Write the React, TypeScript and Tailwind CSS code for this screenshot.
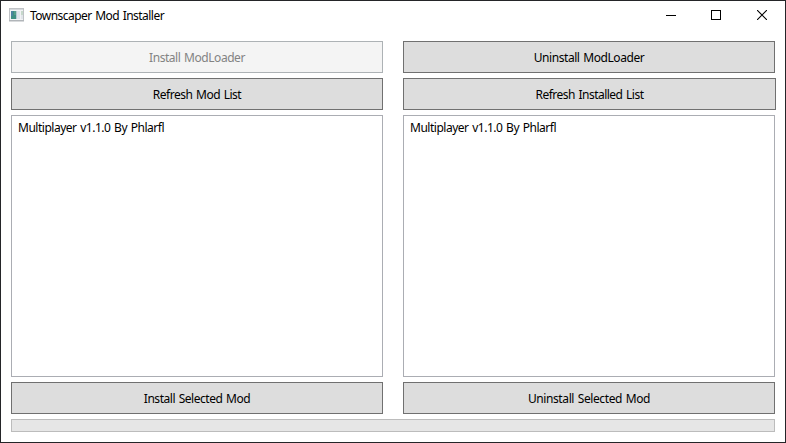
import type { ReactNode } from "react";

function AppIcon() {
  return (
    <svg width="15" height="14" viewBox="0 0 15 14" className="mt-[7px] self-start" shapeRendering="crispEdges" aria-hidden="true">
      <rect x="0.5" y="0.5" width="14" height="12" fill="#f2f3f5" stroke="#bfc2c6" />
      <rect x="1" y="1" width="13" height="1" fill="#d5d8dc" />
      <rect x="2" y="3" width="5" height="8" fill="#3f8f83" />
      <rect x="2" y="3" width="2" height="5" fill="#4b83a0" />
      <rect x="5" y="3" width="2" height="4" fill="#569d8c" />
      <rect x="7" y="3" width="1" height="8" fill="#b5cbd2" />
      <rect x="8" y="3" width="3" height="8" fill="#dfe3ea" />
      <rect x="12" y="3" width="2" height="4" fill="#c6d8cb" />
      <rect x="12" y="7" width="2" height="4" fill="#e1e5ea" />
      <rect x="0" y="12" width="15" height="1" fill="#b1b5b9" />
      <rect x="0" y="13" width="15" height="1" fill="#d8dadc" />
    </svg>
  );
}

function TitleBar() {
  return (
    <header className="flex h-[29px] shrink-0 items-center pl-2">
      <AppIcon />
      <h1 className="ml-[6px] whitespace-nowrap pt-px text-[12px] leading-4 tracking-[-0.54px] text-black">
        Townscaper Mod Installer
      </h1>
      <div className="ml-auto flex h-full">
        <button aria-label="Minimize" className="flex w-[44px] items-start justify-center pt-[9px]">
          <svg width="10" height="10" shapeRendering="crispEdges"><path d="M0 5.5H10" stroke="#000" /></svg>
        </button>
        <button aria-label="Maximize" className="flex w-[46px] items-start justify-center pt-[9px]">
          <svg width="10" height="10" shapeRendering="crispEdges"><rect x="0.5" y="0.5" width="9" height="9" fill="none" stroke="#000" /></svg>
        </button>
        <button aria-label="Close" className="flex w-[46px] items-start justify-center pt-[9px]">
          <svg width="10" height="10"><path d="M0 0L10 10M10 0L0 10" stroke="#000" strokeWidth="1.1" /></svg>
        </button>
      </div>
    </header>
  );
}

function ActionButton({ children, disabled = false, className = "w-full" }: { children: ReactNode; disabled?: boolean; className?: string }) {
  const tone = disabled ? "border-[#adb2b5] bg-[#f4f4f4] text-[#838383]" : "border-[#707070] bg-[#dddddd] text-black";
  return (
    <button disabled={disabled} className={`flex h-8 shrink-0 items-center justify-center whitespace-nowrap border pt-px text-[12px] leading-4 [word-spacing:1px] ${tone} ${className}`}>
      {children}
    </button>
  );
}

function ModList({ items }: { items: string[] }) {
  return (
    <ul className="h-[262px] w-full shrink-0 border border-[#abadb3] bg-white px-1.5 py-1 text-[12px] leading-4 tracking-[-0.48px]">
      {items.map((item) => <li key={item}>{item}</li>)}
    </ul>
  );
}

export default function App() {
  const mods = ["Multiplayer v1.1.0 By Phlarfl"];
  return (
    <div className="flex h-[443px] w-[786px] flex-col overflow-hidden border border-[#242528] bg-white font-['Noto_Sans','Open_Sans',sans-serif] text-black [word-spacing:1px]">
      <TitleBar />
      <main className="flex flex-col gap-[5px] pl-[10px] pt-[11px]">
        <div className="flex gap-5">
          <section className="flex w-[372px] flex-col gap-[5px]">
            <ActionButton disabled><span className="tracking-[-0.45px]">Install ModLoader</span></ActionButton>
            <ActionButton><span className="tracking-[-0.49px]">Refresh Mod List</span></ActionButton>
            <ModList items={mods} />
            <ActionButton><span className="tracking-[-0.47px]">Install Selected Mod</span></ActionButton>
          </section>
          <section className="flex w-[372px] flex-col gap-[5px]">
            <ActionButton><span className="tracking-[-0.43px]">Uninstall ModLoader</span></ActionButton>
            <ActionButton className="w-[373px]"><span className="tracking-[-0.52px]">Refresh Installed List</span></ActionButton>
            <ModList items={mods} />
            <ActionButton><span className="tracking-[-0.4px]">Uninstall Selected Mod</span></ActionButton>
          </section>
        </div>
        <div role="progressbar" aria-valuenow={0} className="h-[13px] w-[764px] border border-[#bcbcbc] bg-[#e6e6e6]" />
      </main>
    </div>
  );
}
